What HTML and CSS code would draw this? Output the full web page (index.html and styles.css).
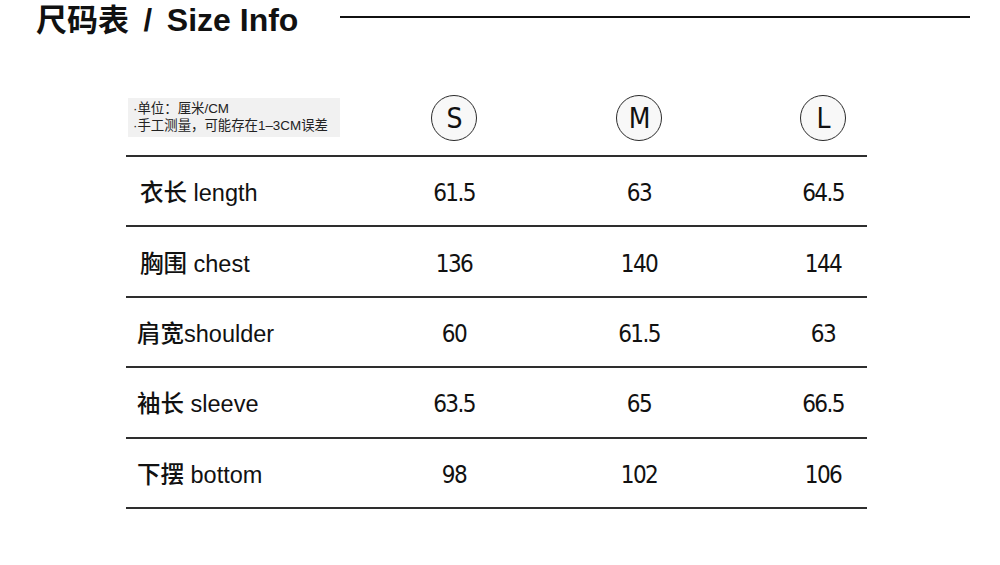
FILE: index.html
```html
<!DOCTYPE html>
<html lang="zh">
<head>
<meta charset="utf-8">
<title>尺码表 / Size Info</title>
<link rel="stylesheet" href="styles.css">
</head>
<body>
<div class="page">
  <div class="title-row">
    <h1 class="title">尺码表 / <span class="title-en">Size Info</span></h1>
    <div class="title-rule"></div>
  </div>
  <div class="table">
    <div class="row head">
      <div class="note">
        <div>·单位：厘米/CM</div>
        <div>·手工测量，可能存在1–3CM误差</div>
      </div>
      <div class="cell"><span class="size">S</span></div>
      <div class="cell"><span class="size">M</span></div>
      <div class="cell"><span class="size">L</span></div>
    </div>
    <div class="row">
      <div class="label">衣长 length</div>
      <div class="cell num">61.5</div>
      <div class="cell num">63</div>
      <div class="cell num">64.5</div>
    </div>
    <div class="row">
      <div class="label">胸围 chest</div>
      <div class="cell num">136</div>
      <div class="cell num">140</div>
      <div class="cell num">144</div>
    </div>
    <div class="row">
      <div class="label tight">肩宽shoulder</div>
      <div class="cell num">60</div>
      <div class="cell num">61.5</div>
      <div class="cell num">63</div>
    </div>
    <div class="row">
      <div class="label tight">袖长 sleeve</div>
      <div class="cell num">63.5</div>
      <div class="cell num">65</div>
      <div class="cell num">66.5</div>
    </div>
    <div class="row">
      <div class="label tight">下摆 bottom</div>
      <div class="cell num">98</div>
      <div class="cell num">102</div>
      <div class="cell num">106</div>
    </div>
  </div>
</div>
</body>
</html>
```

FILE: styles.css
```css
html, body {
  margin: 0;
  padding: 0;
  background: #ffffff;
}
body {
  width: 1000px;
  height: 565px;
  overflow: hidden;
  color: #111;
  font-family: "Liberation Sans", "Noto Sans CJK SC", sans-serif;
}
.page {
  display: flex;
  flex-direction: column;
}
.title-row {
  display: flex;
  align-items: flex-start;
  padding-left: 36px;
  padding-right: 30px;
  height: 40px;
}
.title {
  margin: 0;
  font-size: 31px;
  line-height: 40px;
  font-weight: bold;
  word-spacing: 6px;
  color: #111;
  white-space: nowrap;
}
.title-en {
  font-size: 32px;
  word-spacing: 0;
}
.title-rule {
  flex: 1;
  height: 2px;
  background: #111;
  margin-top: 16px;
  margin-left: 42px;
}
.table {
  margin-top: 45px;
  margin-left: 126px;
  width: 741px;
  display: flex;
  flex-direction: column;
}
.row {
  display: grid;
  grid-template-columns: 235px 186px 184px 184px;
  align-items: center;
  height: 68.4px;
  border-bottom: 2px solid #2e2e2e;
}
.row.head {
  height: 70px;
}
.note {
  margin-left: 2px;
  width: 207px;
  padding: 2px 0 3px 5px;
  background: #f1f1f1;
  font-size: 13.4px;
  line-height: 17px;
  color: #222;
  white-space: nowrap;
  margin-top: -6px;
}
.cell {
  display: flex;
  justify-content: center;
  align-items: center;
}
.size {
  width: 44px;
  height: 44px;
  border: 1px solid #2a2a2a;
  border-radius: 50%;
  background: #f8f8f8;
  display: flex;
  align-items: center;
  justify-content: center;
  font-family: "DejaVu Sans Condensed", "DejaVu Sans", sans-serif;
  font-stretch: condensed;
  font-size: 28px;
  letter-spacing: -1px;
  color: #111;
  margin-top: -4px;
}
.label {
  padding-left: 14px;
  font-size: 23.5px;
  font-weight: 500;
  color: #111;
  white-space: nowrap;
}
.label.tight {
  padding-left: 11px;
}
.num {
  font-family: "DejaVu Sans Condensed", "DejaVu Sans", sans-serif;
  font-stretch: condensed;
  font-size: 24px;
  letter-spacing: -1.6px;
  color: #111;
  padding-top: 4px;
}
```
